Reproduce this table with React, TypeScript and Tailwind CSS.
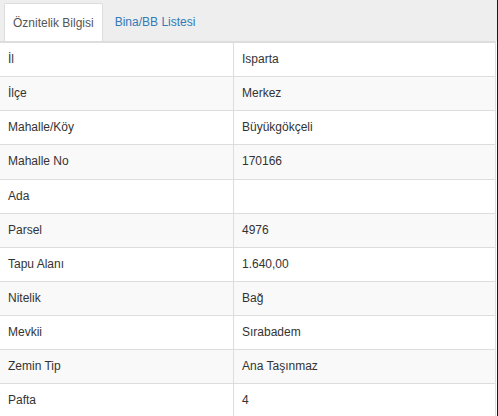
const rows: [string, string][] = [
  ["İl", "Isparta"],
  ["İlçe", "Merkez"],
  ["Mahalle/Köy", "Büyükgökçeli"],
  ["Mahalle No", "170166"],
  ["Ada", ""],
  ["Parsel", "4976"],
  ["Tapu Alanı", "1.640,00"],
  ["Nitelik", "Bağ"],
  ["Mevkii", "Sırabadem"],
  ["Zemin Tip", "Ana Taşınmaz"],
  ["Pafta", "4"],
];

export default function App() {
  return (
    <div className="w-[498px] h-[416px] overflow-hidden bg-white border-r border-[#1a1a1a] text-[12px] text-[#333] font-['Liberation_Sans',Arial,sans-serif]">
      {/* Tabs */}
      <div className="h-[41px] bg-[#eeeeee] flex items-end pl-[4px]">
        <div className="h-[38px] px-[8px] flex items-center bg-white border border-b-0 border-[#dddddd] rounded-t-[2px] text-[#555]">
          Öznitelik Bilgisi
        </div>
        <div className="h-[38px] px-[12px] flex items-center text-[#337ab7]">
          Bina/BB Listesi
        </div>
      </div>

      {/* Table */}
      <div className="border-t-2 border-[#dddddd] mr-px border-r border-r-[#dddddd]">
        {rows.map(([k, v], i) => (
          <div
            key={k}
            className={`grid grid-cols-[234px_1fr] border-b border-[#dddddd] ${
              i % 2 === 1 ? "bg-[#f9f9f9]" : "bg-white"
            }`}
          >
            <div className="px-[8px] py-[8px] leading-[17.14px] border-r border-[#dddddd]">
              {k}
            </div>
            <div className="px-[8px] py-[8px] leading-[17.14px]">{v}</div>
          </div>
        ))}
      </div>
    </div>
  );
}
